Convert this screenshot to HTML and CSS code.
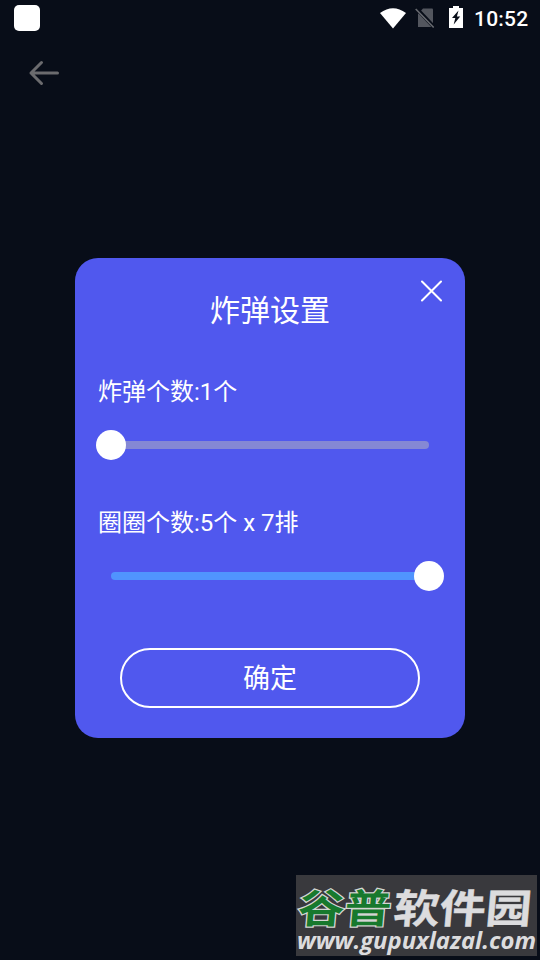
FILE: index.html
```html
<!DOCTYPE html>
<html lang="zh-CN">
<head>
  <meta charset="UTF-8">
  <title>炸弹设置</title>
  <link rel="stylesheet" href="styles.css">
</head>
<body>
<div class="screen">
  <!--状态栏-->
  <div class="status">
    <span class="app"></span>
    <svg class="wifi" width="26" height="21" viewBox="0 0 26 21"><path d="M0 5Q13-4.500 26 5L13 20.500z" fill="#fff"/></svg>
    <svg class="sim" width="20" height="22" viewBox="0 0 20 22">
      <path d="M8 1.500h9q1 0 1 1V20H3V7z" fill="#53565e"/>
      <path d="M1.200 1.200l18 19" stroke="#080d18" stroke-width="4"/>
      <path d="M.7 2l18 18.500" stroke="#686a70" stroke-width="1.600"/>
    </svg>
    <svg class="battery" width="14" height="22" viewBox="0 0 14 22">
      <path d="M4 0h6v2h4v20H0V2h4z" fill="#fff"/>
      <path d="M9.500 4.500L3 12h3.300L4.700 18.500 11.200 10.500H7.900z" fill="#080d18"/>
    </svg>
    <span class="time">10:52</span>
  </div>
  <!--返回-->
  <div class="nav">
    <svg width="32" height="26" viewBox="0 0 32 26" fill="none" stroke="#6b6b6e" stroke-width="3" stroke-linecap="round" stroke-linejoin="round"><path d="M29.500 13H3M13.500 2.500L3 13l10.500 10.500"/></svg>
  </div>
  <!--弹窗-->
  <div class="dialog">
    <svg class="close" width="22" height="22" viewBox="0 0 22 22"><path d="M2 1.500l19 19M21 1.500l-19 19" stroke="#fff" stroke-width="2" stroke-linecap="round"/></svg>
    <h1 class="title">炸弹设置</h1>
    <div class="item">
      <p class="label">炸弹个数:1个</p>
      <div class="slider"><span class="thumb"></span></div>
    </div>
    <div class="item">
      <p class="label">圈圈个数:5个 x 7排</p>
      <div class="slider full"><span class="thumb"></span></div>
    </div>
    <button class="ok">确定</button>
  </div>
  <!--水印-->
  <svg class="mark" width="241" height="81" viewBox="0 0 241 81">
    <g class="mark-name" transform="translate(1 48) skewX(-5) scale(1.180 1)">
      <text class="green" x="0" y="0" textLength="79" lengthAdjust="spacingAndGlyphs">谷普</text>
      <text class="gray" x="81" y="0" textLength="117" lengthAdjust="spacingAndGlyphs">软件园</text>
    </g>
    <text class="mark-url" x="1" y="74" textLength="239" lengthAdjust="spacingAndGlyphs">www.gupuxlazal.com</text>
  </svg>
</div>
</body>
</html>
```
FILE: styles.css
```css
* {
  padding: 0;
  margin: 0;
  box-sizing: border-box;
}

body {
  background: #080d18;
  font-family: Roboto, "Noto Sans CJK SC", sans-serif;
  color: #fff;
}

.screen {
  width: 540px;
  height: 960px;
  position: relative;
  overflow: hidden;
}

.status {
  height: 36px;
  padding: 0 12px 0 14px;
  display: flex;
  align-items: center;
}

.app {
  width: 26px;
  height: 26px;
  margin-right: auto;
  border-radius: 5px;
  background: #fff;
}

.wifi {
  margin-right: 9px;
}

.sim {
  margin-right: 14px;
}

.battery {
  margin: -2px 11px 0 0;
}

.time {
  width: 54px;
  padding-top: 2px;
  font-size: 21px;
  font-weight: 500;
  line-height: 36px;
  letter-spacing: .2px;
  white-space: nowrap;
}

.nav {
  height: 222px;
  padding: 24px 0 0 28px;
}

.dialog {
  width: 390px;
  height: 480px;
  margin: 0 auto;
  padding: 31px 21px 0;
  border-radius: 23px;
  background: #5058ee;
  position: relative;
}

.close {
  position: absolute;
  right: 23px;
  top: 22px;
}

.title {
  height: 44px;
  margin-bottom: 41px;
  font-size: 30px;
  font-weight: 400;
  line-height: 44px;
  text-align: center;
}

.item {
  height: 131px;
}

.label {
  height: 36px;
  margin-bottom: 20px;
  padding-left: 2px;
  font-size: 24px;
  line-height: 36px;
}

.slider {
  height: 30px;
  display: flex;
  align-items: center;
}

.slider::after {
  content: "";
  width: 318px;
  height: 8px;
  margin-left: -15px;
  border-radius: 4px;
  background: #8588d4;
}

.thumb {
  width: 30px;
  height: 30px;
  border-radius: 50%;
  background: #fff;
  position: relative;
  z-index: 1;
}

.slider.full {
  flex-direction: row-reverse;
  justify-content: flex-end;
  padding-left: 15px;
}

.slider.full::after {
  margin: 0 -15px 0 0;
  background: #5094fe;
}

.ok {
  width: 300px;
  height: 60px;
  margin: 12px 24px 0;
  padding-bottom: 3px;
  border: 2px solid #fff;
  border-radius: 30px;
  background: none;
  color: #fff;
  font-family: inherit;
  font-size: 27px;
  display: block;
}

.mark {
  position: absolute;
  left: 296px;
  top: 875px;
  background: #39393d;
}

.mark-name {
  font-family: "Noto Sans CJK SC", sans-serif;
  font-size: 40px;
  font-weight: 700;
}

.green {
  fill: #17792d;
  stroke: #d4d6d4;
  stroke-width: 2.4px;
  paint-order: stroke;
}

.gray {
  fill: #dcdcde;
  stroke: #dcdcde;
  stroke-width: .4px;
}

.mark-url {
  font-family: "Open Sans", sans-serif;
  font-size: 24px;
  font-weight: 700;
  font-style: italic;
  fill: #dcdcde;
}
```
